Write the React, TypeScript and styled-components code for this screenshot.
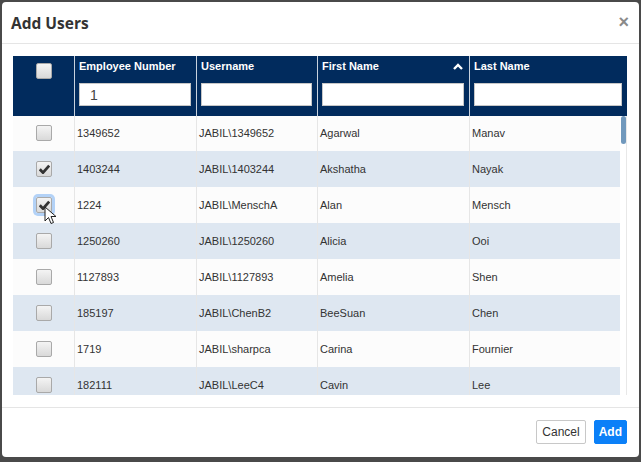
import styled, { createGlobalStyle } from "styled-components";

const GlobalStyle = createGlobalStyle`
  html, body {
    margin: 0;
    padding: 0;
    background: #4a4a4a;
  }
  #root {
    height: 462px;
    overflow: hidden;
  }
  * {
    box-sizing: border-box;
  }
`;

const cols = "61px 122px 121px 152px 1fr";

const Modal = styled.div`
  margin: 2px 2px 0 2px;
  width: 637px;
  height: 455px;
  background: #fff;
  border-radius: 4px;
  display: flex;
  flex-direction: column;
  font-family: "Liberation Sans", Arial, sans-serif;
  color: #333;
`;

const Header = styled.div`
  height: 42px;
  display: flex;
  align-items: center;
  justify-content: space-between;
  padding: 0 10px 0 9px;
  border-bottom: 1px solid #e5e5e5;
`;

const Title = styled.h4`
  margin: 0;
  font-family: "Open Sans", sans-serif;
  font-size: 15.5px;
  font-weight: 700;
  color: #333;
`;

const Close = styled.span`
  font-family: "Liberation Sans", Arial, sans-serif;
  font-size: 18px;
  font-weight: 700;
  color: #8a8a8a;
  line-height: 1;
  margin-top: -2px;
`;

const Body = styled.div`
  padding: 12px 12px 12px 11px;
  border-bottom: 1px solid #e5e5e5;
`;

const Table = styled.div`
  width: 614px;
`;

const HeadRow = styled.div`
  display: grid;
  grid-template-columns: ${cols};
  height: 60px;
  background: #012b5d;
`;

const HeadCell = styled.div`
  padding: 3px 5px 10px 4px;
  display: flex;
  flex-direction: column;
  justify-content: space-between;
  border-left: 1px solid #c8d2de;
  &:first-child {
    border-left: none;
    align-items: center;
    justify-content: flex-start;
    padding: 7px 0 0 1px;
  }
`;

const Label = styled.div`
  display: flex;
  align-items: center;
  justify-content: space-between;
  height: 14px;
  color: #fff;
  font-size: 11px;
  font-weight: 700;
  padding-right: 1px;
`;

const Filter = styled.input`
  height: 23px;
  width: 100%;
  border: 1px solid #c7c7c7;
  background: #fff;
  font-family: "Liberation Sans", Arial, sans-serif;
  font-size: 14px;
  color: #444;
  padding: 0 0 0 10px;
  outline: none;
`;

const Scroller = styled.div`
  display: flex;
  height: 279px;
  overflow: hidden;
`;

const Rows = styled.div`
  flex: 1;
  margin-top: -1px;
`;

const Track = styled.div`
  width: 7px;
  padding-left: 1px;
  border-right: 1px solid #e8e8e8;
`;

const Thumb = styled.div`
  width: 5px;
  height: 28px;
  border-radius: 3px;
  background: #7199bd;
`;

const Row = styled.div<{ $alt: boolean }>`
  display: grid;
  grid-template-columns: ${cols};
  height: 36px;
  background: ${(p) => (p.$alt ? "#dee7f1" : "#fcfcfc")};
`;

const Cell = styled.div`
  display: flex;
  align-items: center;
  padding: 0 0 1px 2px;
  font-size: 11px;
  color: #333;
  border-left: 1px solid #e6e6e6;
  white-space: nowrap;
  overflow: hidden;
  &:first-child {
    border-left: none;
    justify-content: center;
    padding: 0 0 0 1px;
    position: relative;
    overflow: visible;
  }
`;

const Box = styled.div<{ $focus?: boolean }>`
  width: 16px;
  height: 16px;
  border: 1px solid #a9a9a9;
  border-radius: 2px;
  background: linear-gradient(#f4f4f4, #d9d9d9);
  display: flex;
  align-items: center;
  justify-content: center;
  box-shadow: ${(p) => (p.$focus ? "0 0 0 3px #b3d2f7" : "none")};
`;

const Cursor = styled.svg`
  position: absolute;
  left: 31px;
  top: 19px;
`;

const Footer = styled.div`
  flex: 1;
  display: flex;
  justify-content: flex-end;
  align-items: center;
  gap: 8px;
  padding: 0 12px 1px 0;
`;

const Button = styled.button<{ $primary?: boolean }>`
  height: 24px;
  padding: 0 ${(p) => (p.$primary ? "4px" : "5px")};
  border-radius: 2px;
  font-family: "Liberation Sans", Arial, sans-serif;
  font-size: 12px;
  font-weight: ${(p) => (p.$primary ? 700 : 400)};
  color: ${(p) => (p.$primary ? "#fff" : "#333")};
  background: ${(p) => (p.$primary ? "#0b80f8" : "#fff")};
  border: 1px solid ${(p) => (p.$primary ? "#0b80f8" : "#c8c8c8")};
`;

const users = [
  { id: "1349652", user: "JABIL\\1349652", first: "Agarwal", last: "Manav", on: false },
  { id: "1403244", user: "JABIL\\1403244", first: "Akshatha", last: "Nayak", on: true },
  { id: "1224", user: "JABIL\\MenschA", first: "Alan", last: "Mensch", on: true, focus: true },
  { id: "1250260", user: "JABIL\\1250260", first: "Alicia", last: "Ooi", on: false },
  { id: "1127893", user: "JABIL\\1127893", first: "Amelia", last: "Shen", on: false },
  { id: "185197", user: "JABIL\\ChenB2", first: "BeeSuan", last: "Chen", on: false },
  { id: "1719", user: "JABIL\\sharpca", first: "Carina", last: "Fournier", on: false },
  { id: "182111", user: "JABIL\\LeeC4", first: "Cavin", last: "Lee", on: false },
];

function Check() {
  return (
    <svg width="11" height="10" viewBox="0 0 11 10">
      <path d="M0.8 5.2 L4 8.6 L10.2 1.6" fill="none" stroke="#333" strokeWidth="2.8" strokeLinejoin="miter" />
    </svg>
  );
}

function SortUp() {
  return (
    <svg width="10" height="7" viewBox="0 0 10 7">
      <path d="M1 6 L5 2 L9 6" fill="none" stroke="#fff" strokeWidth="2.4" />
    </svg>
  );
}

function App() {
  return (
    <>
      <GlobalStyle />
      <Modal>
        <Header>
          <Title>Add Users</Title>
          <Close>×</Close>
        </Header>
        <Body>
          <Table>
            <HeadRow>
              <HeadCell>
                <Box />
              </HeadCell>
              <HeadCell>
                <Label>Employee Number</Label>
                <Filter defaultValue="1" />
              </HeadCell>
              <HeadCell>
                <Label>Username</Label>
                <Filter />
              </HeadCell>
              <HeadCell>
                <Label>
                  First Name
                  <SortUp />
                </Label>
                <Filter />
              </HeadCell>
              <HeadCell>
                <Label>Last Name</Label>
                <Filter />
              </HeadCell>
            </HeadRow>
            <Scroller>
              <Rows>
                {users.map((u, i) => (
                  <Row key={u.id} $alt={i % 2 === 1}>
                    <Cell>
                      <Box $focus={u.focus}>{u.on && <Check />}</Box>
                      {u.focus && (
                        <Cursor width="13" height="20" viewBox="0 0 13 20">
                          <path d="M1 1 L1 15 L4.5 11.5 L7 17.5 L9.5 16.5 L7 10.5 L12 10.5 Z" fill="#fff" stroke="#222" strokeWidth="1" strokeLinejoin="round" />
                        </Cursor>
                      )}
                    </Cell>
                    <Cell>{u.id}</Cell>
                    <Cell>{u.user}</Cell>
                    <Cell>{u.first}</Cell>
                    <Cell>{u.last}</Cell>
                  </Row>
                ))}
              </Rows>
              <Track>
                <Thumb />
              </Track>
            </Scroller>
          </Table>
        </Body>
        <Footer>
          <Button>Cancel</Button>
          <Button $primary>Add</Button>
        </Footer>
      </Modal>
    </>
  );
}

export default App;
